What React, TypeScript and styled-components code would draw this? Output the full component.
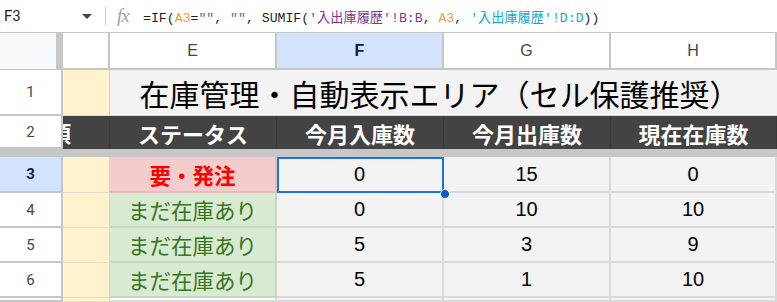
import React from 'react';
import styled, { createGlobalStyle, css } from 'styled-components';

const GlobalStyle = createGlobalStyle`
  html, body {
    margin: 0;
    padding: 0;
    background: #ffffff;
    overflow: hidden;
  }
  * {
    box-sizing: border-box;
  }
`;

const JP = `'Noto Sans CJK JP', 'Noto Sans', sans-serif`;
const LATIN = `'Liberation Sans', Arial, 'Noto Sans CJK JP', sans-serif`;
const COLS = '63px 47px 167px 167px 167px 166px';

const HEAD_LINE = '#c4c7c5';
const GRID_LINE = '#dadada';

// Formula bar
const FormulaBar = styled.div`
  display: flex;
  align-items: center;
  height: 33px;
  border-bottom: 1px solid ${HEAD_LINE};
  background: #fff;
`;

const NameBox = styled.div`
  display: flex;
  align-items: center;
  justify-content: space-between;
  width: 105px;
  padding: 0 13px 0 4px;
  font-family: 'Roboto', ${LATIN};
  font-size: 15px;
  color: #1f1f1f;
`;

const Divider = styled.div`
  width: 1px;
  height: 18px;
  background: #c7c7c7;
`;

const FxIcon = styled.span`
  width: 37px;
  padding-left: 11px;
  font-family: 'Liberation Serif', serif;
  font-style: italic;
  font-size: 19px;
  color: #a0a0a0;
  letter-spacing: -1px;
`;

const Formula = styled.div`
  font-family: 'Liberation Mono', 'Noto Sans CJK JP', monospace;
  font-size: 13.2px;
  color: #1f1f1f;
  white-space: nowrap;
`;

const Tok = styled.span<{ $c: string }>`
  color: ${({ $c }) => $c};
`;

// Sheet grid
const Row = styled.div<{ $h: number }>`
  display: grid;
  grid-template-columns: ${COLS};
  height: ${({ $h }) => $h}px;
`;

const FreezeBar = styled.div`
  height: 8px;
  background: #c7c7c7;
`;

const cellBase = css`
  display: flex;
  align-items: center;
  justify-content: center;
  overflow: hidden;
  white-space: nowrap;
`;

const Corner = styled.div`
  background: #f8f9fa;
  border-right: 7px solid #c7c7c7;
  border-bottom: 1px solid ${HEAD_LINE};
`;

const ColHead = styled.div<{ $active?: boolean }>`
  ${cellBase};
  background: ${({ $active }) => ($active ? '#d3e3fd' : '#ffffff')};
  color: ${({ $active }) => ($active ? '#041e49' : '#444746')};
  font-weight: ${({ $active }) => ($active ? 700 : 400)};
  font-family: ${LATIN};
  font-size: 16px;
  border-right: 2px solid ${HEAD_LINE};
  border-bottom: 2px solid ${HEAD_LINE};
`;

const RowHead = styled.div<{ $active?: boolean }>`
  ${cellBase};
  background: ${({ $active }) => ($active ? '#d3e3fd' : '#ffffff')};
  color: ${({ $active }) => ($active ? '#041e49' : '#444746')};
  font-weight: ${({ $active }) => ($active ? 700 : 400)};
  font-family: 'Roboto', ${LATIN};
  font-size: 15px;
  border-right: 2px solid ${HEAD_LINE};
  border-bottom: 2px solid ${HEAD_LINE};
`;

const BandCell = styled.div<{ $dark?: boolean }>`
  ${cellBase};
  justify-content: flex-start;
  background: ${({ $dark }) => ($dark ? '#434343' : '#fff2cc')};
  border-right: 1px solid ${({ $dark }) => ($dark ? '#3a3a3a' : '#d9d2bf')};
  border-bottom: 1px solid ${({ $dark }) => ($dark ? '#434343' : '#e2dccb')};
  color: #fff;
  font-family: ${JP};
  font-weight: 700;
  font-size: 22px;
`;

// right edge of a header whose column is scrolled under the row numbers
const Clipped = styled.span`
  margin-left: -14px;
`;

const TitleCell = styled.div`
  ${cellBase};
  grid-column: span 4;
  background: #f3f3f3;
  border-bottom: 1px solid ${GRID_LINE};
  font-family: ${JP};
  font-size: 30px;
  color: #000;
  padding-right: 8px;
`;

const HeadCell = styled.div`
  ${cellBase};
  background: #434343;
  border-right: 1px solid #3a3a3a;
  color: #ffffff;
  font-family: ${JP};
  font-weight: 700;
  font-size: 22px;
`;

const StatusCell = styled.div<{ $alert?: boolean }>`
  ${cellBase};
  background: ${({ $alert }) => ($alert ? '#f4cccc' : '#d9ead3')};
  color: ${({ $alert }) => ($alert ? '#ff0000' : '#38761d')};
  font-weight: ${({ $alert }) => ($alert ? 700 : 400)};
  border-right: 2px solid ${({ $alert }) => ($alert ? '#e6bcbc' : '#c8d9c2')};
  border-bottom: 2px solid ${({ $alert }) => ($alert ? '#e6bcbc' : '#c8d9c2')};
  font-family: ${JP};
  font-size: 21.5px;
`;

const NumCell = styled.div<{ $blank?: boolean }>`
  display: flex;
  align-items: center;
  justify-content: center;
  white-space: nowrap;
  position: relative;
  background: ${({ $blank }) => ($blank ? '#ffffff' : '#f3f3f3')};
  border-right: 2px solid ${GRID_LINE};
  border-bottom: 2px solid ${GRID_LINE};
  font-family: ${LATIN};
  font-size: 20px;
  color: #000;
`;

const Selection = styled.div`
  position: absolute;
  left: 0;
  top: 0;
  right: -2px;
  bottom: -2px;
  border: 2px solid #1a73e8;
  z-index: 2;
`;

const Handle = styled.div`
  position: absolute;
  right: -8px;
  bottom: -8px;
  width: 10px;
  height: 10px;
  border-radius: 50%;
  background: #0b57d0;
  border: 1px solid #ffffff;
`;

const rows = [
  { n: 4, status: 'まだ在庫あり', vals: ['0', '10', '10'] },
  { n: 5, status: 'まだ在庫あり', vals: ['5', '3', '9'] },
  { n: 6, status: 'まだ在庫あり', vals: ['5', '1', '10'] },
];

const App: React.FC = () => (
  <>
    <GlobalStyle />
    <FormulaBar>
      <NameBox>
        <span>F3</span>
        <svg width="10" height="5" viewBox="0 0 10 5">
          <path d="M0 0h10L5 5z" fill="#444746" />
        </svg>
      </NameBox>
      <Divider />
      <FxIcon>fx</FxIcon>
      <Formula>
        =IF(<Tok $c="#f4a11d">A3</Tok>=<Tok $c="#1e8e3e">""</Tok>, <Tok $c="#1e8e3e">""</Tok>, SUMIF(
        <Tok $c="#7e3794">'入出庫履歴'!B:B</Tok>, <Tok $c="#f4a11d">A3</Tok>,{' '}
        <Tok $c="#11a9cc">'入出庫履歴'!D:D</Tok>))
      </Formula>
    </FormulaBar>

    <Row $h={37}>
      <Corner />
      <ColHead />
      <ColHead>E</ColHead>
      <ColHead $active>F</ColHead>
      <ColHead>G</ColHead>
      <ColHead>H</ColHead>
    </Row>

    <Row $h={46}>
      <RowHead>1</RowHead>
      <BandCell />
      <TitleCell>在庫管理・自動表示エリア（セル保護推奨）</TitleCell>
    </Row>

    <Row $h={33}>
      <RowHead>2</RowHead>
      <BandCell $dark>
        <Clipped>項</Clipped>
      </BandCell>
      <HeadCell>ステータス</HeadCell>
      <HeadCell>今月入庫数</HeadCell>
      <HeadCell>今月出庫数</HeadCell>
      <HeadCell>現在在庫数</HeadCell>
    </Row>
    <FreezeBar />

    <Row $h={36}>
      <RowHead $active>3</RowHead>
      <BandCell />
      <StatusCell $alert>要・発注</StatusCell>
      <NumCell>
        0
        <Selection>
          <Handle />
        </Selection>
      </NumCell>
      <NumCell>15</NumCell>
      <NumCell>0</NumCell>
    </Row>

    {rows.map((r) => (
      <Row key={r.n} $h={35}>
        <RowHead>{r.n}</RowHead>
        <BandCell />
        <StatusCell>{r.status}</StatusCell>
        {r.vals.map((v, i) => (
          <NumCell key={i}>{v}</NumCell>
        ))}
      </Row>
    ))}

    <Row $h={4}>
      <RowHead />
      <BandCell />
      <NumCell $blank />
      <NumCell />
      <NumCell />
      <NumCell />
    </Row>
  </>
);

export default App;
